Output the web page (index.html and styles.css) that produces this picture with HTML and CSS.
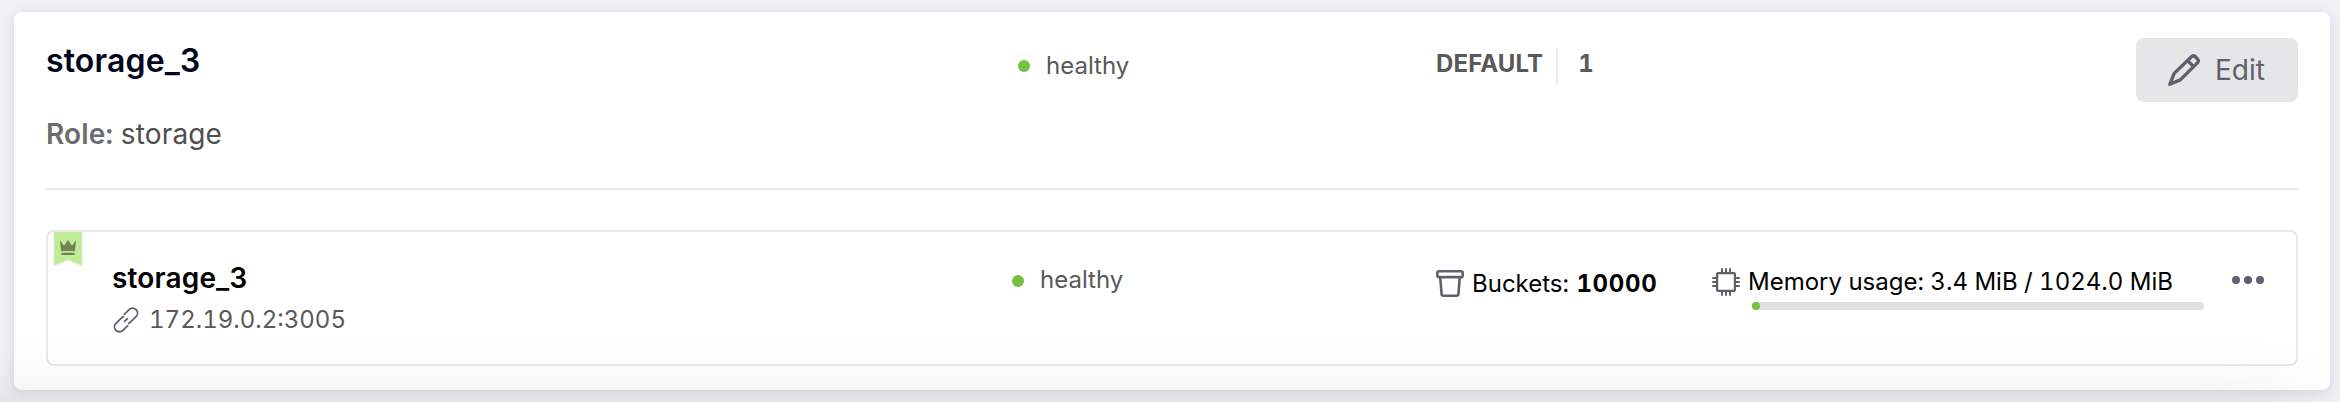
FILE: index.html
```html
<!DOCTYPE html>
<html lang="en">
<head>
<meta charset="utf-8">
<title>storage_3</title>
<link rel="stylesheet" href="styles.css">
</head>
<body>
<main class="card">
  <header class="card-head">
    <h1 class="title"><span>storage_3</span></h1>
    <div class="status"><i class="dot"></i><span>healthy</span></div>
    <div class="group"><b class="group-name">DEFAULT</b><b class="group-weight">1</b></div>
    <button class="edit" type="button">
      <svg width="32" height="32" viewBox="0 0 32 32" fill="none" stroke="#5f606c" stroke-width="3.4" stroke-linejoin="round"><path d="M1.8 30.3 6.2 19.4 23.4 2.8Q25.4 .9 27.5 2.8L29.4 4.8Q31.3 6.9 29.4 8.9L12.3 25.9Z"/><path d="M19.6 6.6 25.5 12.5"/></svg>
      <span>Edit</span>
    </button>
  </header>
  <p class="role"><b>Role:</b> <span>storage</span></p>
  <section class="server">
    <svg class="ribbon" width="28" height="34" viewBox="0 0 28 34"><path fill="#c2eb97" d="M0 0H28V34L14 28 0 34Z"/><path fill="#6f8653" d="M6 8.3 10 13.8 14 8 18 13.8 22 8.3 21 19H7ZM7.4 20.8H20.6V22.9H7.4Z"/></svg>
    <div class="identity">
      <h2 class="name"><span>storage_3</span></h2>
      <div class="address">
        <svg width="26" height="26" viewBox="0 0 26 26" fill="none" stroke="#5f606c" stroke-width="1.8" stroke-linecap="round"><path d="M11.3 7.4 16.1 2.7A4.8 4.8 0 0 1 23.1 9.6L17.4 15.2Q16.6 16 15.6 16.3"/><path d="M14.7 18.6 9.9 23.3A4.8 4.8 0 0 1 2.9 16.4L8.6 10.8Q9.4 10 10.4 9.7"/><path d="M11.6 14.4 14.4 11.6"/></svg>
        <span>172.19.0.2:3005</span>
      </div>
    </div>
    <div class="status server-status"><i class="dot"></i><span>healthy</span></div>
    <div class="buckets">
      <svg width="28" height="28" viewBox="0 0 28 28" fill="none" stroke="#5f606c" stroke-width="2.6" stroke-linejoin="round"><rect x="1.3" y="1.3" width="25.4" height="5.8" rx="1.6"/><path d="M4.2 7 5.6 24.2Q5.7 25.7 7.2 25.7H20.8Q22.3 25.7 22.4 24.2L23.8 7"/></svg>
      <span class="label">Buckets: <b>10000</b></span>
    </div>
    <div class="memory">
      <svg width="28" height="28" viewBox="0 0 28 28" fill="none" stroke="#5f606c" stroke-width="2.2"><rect x="5.1" y="5.1" width="17.8" height="17.8" rx="1"/><path stroke-width="2" stroke-linecap="round" d="M10 1V4M14 1V4M18 1V4M10 24V27M14 24V27M18 24V27M1 10H4M1 14H4M1 18H4M24 10H27M24 14H27M24 18H27"/></svg>
      <div class="usage">
        <span class="label">Memory usage: 3.4 MiB / 1024.0 MiB</span>
        <div class="bar"><div class="bar-fill"></div></div>
      </div>
    </div>
    <div class="menu"><i></i><i></i><i></i></div>
  </section>
</main>
<div class="bottom-shade"><div class="bottom-shade-source"></div></div>
</body>
</html>
```
FILE: styles.css
```css
* { box-sizing: border-box; }
html {
  height: 402px;
  overflow: hidden;
}
body {
  margin: 0;
  height: 402px;
  padding: 12px 10px 12px 14px;
  overflow: hidden;
  position: relative;
  background: #f0f1f5;
  font-family: Inter, "Liberation Sans", sans-serif;
  font-optical-sizing: none;
  font-variant-numeric: tabular-nums;
  color: #000;
  white-space: nowrap;
}
h1, h2, p { margin: 0; }
b { font-weight: 600; }
svg { display: block; flex: none; }
.card {
  height: 378px;
  padding: 26px 32px 24px;
  border-radius: 8px;
  background: #fff;
  box-shadow: 0 2px 12px rgba(20, 24, 50, .12);
}
.card-head {
  display: grid;
  grid-template-columns: 972px 418px 1fr auto;
  align-items: start;
  height: 64px;
}
.title {
  padding-top: 3px;
  font-size: 32px;
  line-height: 40px;
  font-weight: 600;
  letter-spacing: .15px;
  color: #02061c;
}
.status {
  display: flex;
  align-items: center;
  gap: 16px;
  font-size: 24px;
  line-height: 32px;
  color: #595959;
}
.card-head .status { padding-top: 12px; }
.dot {
  width: 12px;
  height: 12px;
  border-radius: 50%;
  background: #73c141;
}
.group {
  display: flex;
  align-items: center;
  padding-top: 10px;
  font-size: 24px;
  line-height: 32px;
  color: #595959;
}
.group b { font-weight: 700; }
.group-weight {
  height: 36px;
  margin-left: 13px;
  padding-left: 20px;
  border-left: 2px solid #e8e8e8;
}
.group-name {
  height: 36px;
  letter-spacing: .15px;
}
.edit {
  display: flex;
  align-items: center;
  gap: 15px;
  width: 162px;
  height: 64px;
  padding: 0 0 0 32px;
  border: 0;
  border-radius: 8px;
  background: #e5e6e8;
  color: #5f606c;
  font: 400 28px/40px Inter, "Liberation Sans", sans-serif;
  font-optical-sizing: none;
}
.role {
  height: 88px;
  padding-top: 12px;
  border-bottom: 2px solid #e8e8e8;
  font-size: 28px;
  line-height: 40px;
  letter-spacing: .15px;
  color: #4f4f4f;
}
.role b { color: #6c6c6c; }
.server {
  display: grid;
  grid-template-columns: 964px 424px 276px 484px 1fr;
  align-items: start;
  position: relative;
  height: 136px;
  margin-top: 40px;
  border: 2px solid #e8e8e8;
  border-radius: 8px;
}
.ribbon {
  position: absolute;
  top: 0;
  left: 6px;
}
.identity { padding: 26px 0 0 64px; }
.name {
  font-size: 28px;
  line-height: 40px;
  font-weight: 600;
  letter-spacing: .15px;
}
.address {
  display: flex;
  align-items: center;
  gap: 10px;
  padding-left: 1px;
  margin-top: 6px;
  font-size: 24px;
  line-height: 32px;
  color: #595959;
}
.server-status { padding-top: 32px; }
.server-status .dot { position: relative; top: 1px; }
.buckets {
  display: flex;
  gap: 8px;
  padding-top: 38px;
}
.buckets b {
  margin-left: 1px;
  font-weight: 700;
  letter-spacing: .7px;
}
.label {
  display: block;
  font-size: 24px;
  line-height: 28px;
}
.memory {
  display: flex;
  gap: 8px;
  padding-top: 36px;
}
.bar {
  width: 452px;
  height: 8px;
  margin: 6px 0 0 4px;
  border-radius: 4px;
  background: #e0e0e0;
}
.bar-fill {
  width: 8px;
  height: 8px;
  border-radius: 4px;
  background: #73c141;
}
.menu {
  display: flex;
  gap: 4px;
  padding: 44px 0 0 36px;
}
.menu i {
  width: 8px;
  height: 8px;
  border-radius: 50%;
  background: #5f606c;
}
.bottom-shade {
  position: absolute;
  inset: 0;
  overflow: hidden;
  pointer-events: none;
}
.bottom-shade-source {
  width: 2400px;
  height: 200px;
  margin: 410px 0 0 -100px;
  box-shadow: 0 0 80px rgba(0, 0, 0, .12);
}
```
